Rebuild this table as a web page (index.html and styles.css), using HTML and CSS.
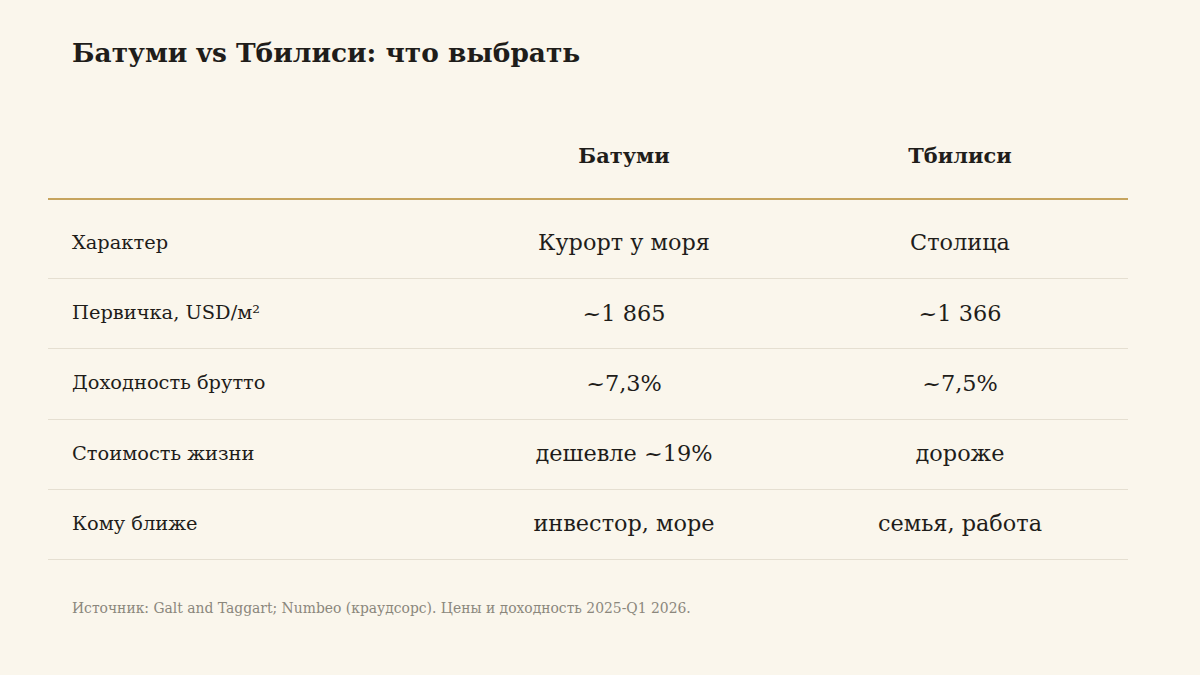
FILE: index.html
```html
<!DOCTYPE html>
<html lang="ru">
<head>
<meta charset="utf-8">
<link rel="stylesheet" href="styles.css">
</head>
<body>
<div class="page">
  <h1 class="title">Батуми vs Тбилиси: что выбрать</h1>
  <table class="cmp">
    <thead>
      <tr><th class="lab"></th><th>Батуми</th><th>Тбилиси</th></tr>
    </thead>
    <tbody>
      <tr class="first"><td class="lab">Характер</td><td>Курорт у моря</td><td>Столица</td></tr>
      <tr><td class="lab">Первичка, USD/м²</td><td>~1 865</td><td>~1 366</td></tr>
      <tr><td class="lab">Доходность брутто</td><td>~7,3%</td><td>~7,5%</td></tr>
      <tr><td class="lab">Стоимость жизни</td><td>дешевле ~19%</td><td>дороже</td></tr>
      <tr><td class="lab">Кому ближе</td><td>инвестор, море</td><td>семья, работа</td></tr>
    </tbody>
  </table>
  <p class="source">Источник: Galt and Taggart; Numbeo (краудсорс). Цены и доходность 2025-Q1 2026.</p>
</div>
</body>
</html>
```
FILE: styles.css
```css
html, body { margin: 0; padding: 0; }
body {
  background: #faf6ec;
  color: #1f1d1a;
  font-family: "DejaVu Serif", serif;
  width: 1200px;
  height: 675px;
  overflow: hidden;
}
.page { padding: 35px 72px 0 48px; }
.title {
  margin: 0 0 0 24px;
  font-size: 26.4px;
  font-weight: bold;
  line-height: 36px;
}
.cmp {
  width: 1080px;
  border-collapse: collapse;
  table-layout: fixed;
  margin-top: 65px;
}
.cmp th {
  font-size: 20.9px;
  font-weight: bold;
  height: 38px;
  padding: 0 0 24px;
  text-align: center;
  border-bottom: 2px solid #c6a45e;
  vertical-align: middle;
}
.cmp th.lab { width: 408px; }
.cmp td {
  font-size: 22.4px;
  text-align: center;
  height: 67.25px;
  padding: 0 0 2px;
  border-bottom: 1px solid #e5dfd1;
  vertical-align: middle;
}
.cmp tr.first td { height: 72px; padding-top: 6px; padding-bottom: 0; }
.cmp td.lab {
  text-align: left;
  padding-left: 24px;
  font-size: 19.4px;
}
.source {
  margin: 40px 0 0 24px;
  font-size: 13.9px;
  color: #8b877c;
}
```
